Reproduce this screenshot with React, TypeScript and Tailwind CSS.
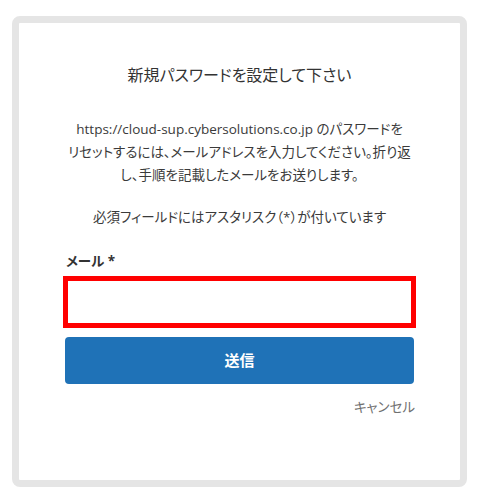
export default function App() {
  return (
    <main
      className="min-h-screen bg-white pt-[16px] pl-[12px] [font-feature-settings:'palt']"
      style={{ fontFamily: '"Open Sans", "Noto Sans CJK JP", sans-serif' }}
    >
      {/* CARD */}
      <div className="w-[455px] h-[471px] border-[7px] border-[#e5e5e5] rounded-[8px] bg-white">
        <div className="px-[44px] pt-[40px] flex flex-col">
          <h1 className="text-center text-[16px] leading-[24px] text-[#333]">
            新規パスワードを設定して下さい
          </h1>

          <p className="mt-[31px] text-center text-[13.5px] leading-[23px] text-[#3a3a3a] whitespace-nowrap">
            https://cloud-sup.cybersolutions.co.jp のパスワードを
            <br />
            リセットするには、メールアドレスを入力してください。折り返
            <br />
            し、手順を記載したメールをお送りします。
          </p>

          <p className="mt-[19px] text-center text-[13.5px] leading-[23px] text-[#3a3a3a]">
            必須フィールドにはアスタリスク（*）が付いています
          </p>

          {/* EMAIL */}
          <label className="mt-[22px] pl-[3px] text-[13.5px] leading-[20px] font-bold text-[#333]">
            メール *
          </label>
          <input
            type="text"
            className="mt-[5px] h-[52px] border-[5px] border-[#ff0000] outline-none"
          />

          <button className="mt-[9px] mx-[2px] h-[47px] rounded-[4px] bg-[#1f72b7] text-white text-[15px] font-bold">
            送信
          </button>

          <div className="mt-[13px] pr-[1px] text-right text-[13.5px] leading-[20px] text-[#707070]">
            キャンセル
          </div>
        </div>
      </div>
    </main>
  );
}
